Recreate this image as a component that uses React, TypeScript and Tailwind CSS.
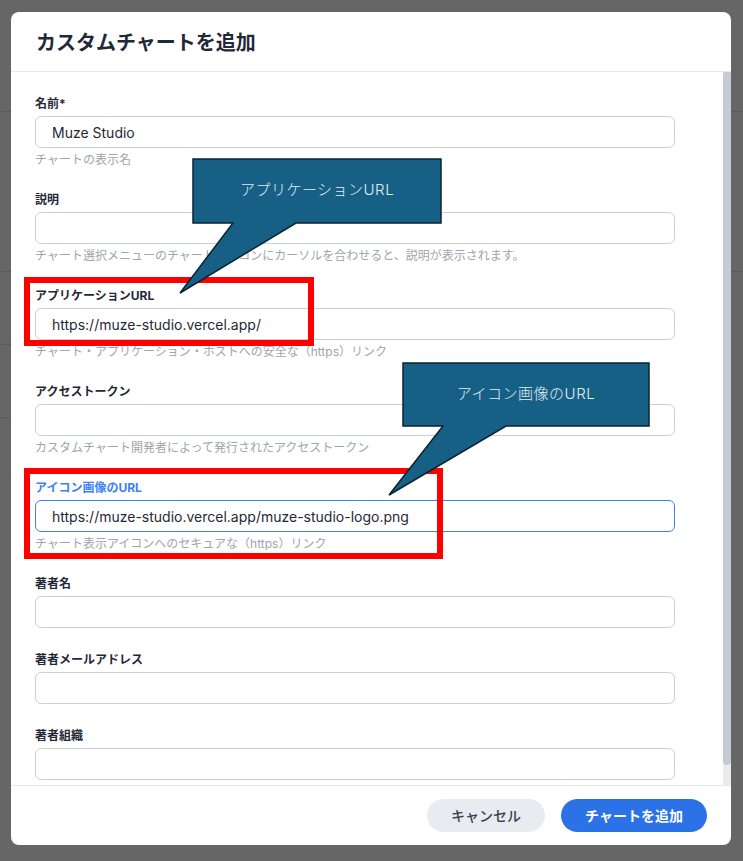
import React from "react";

interface Field {
  label: string;
  value?: string;
  help?: string;
  active?: boolean;
}

const fields: Field[] = [
  { label: "名前*", value: "Muze Studio", help: "チャートの表示名" },
  {
    label: "説明",
    help: "チャート選択メニューのチャートアイコンにカーソルを合わせると、説明が表示されます。",
  },
  {
    label: "アプリケーションURL",
    value: "https://muze-studio.vercel.app/",
    help: "チャート・アプリケーション・ホストへの安全な（https）リンク",
  },
  { label: "アクセストークン", help: "カスタムチャート開発者によって発行されたアクセストークン" },
  {
    label: "アイコン画像のURL",
    value: "https://muze-studio.vercel.app/muze-studio-logo.png",
    help: "チャート表示アイコンへのセキュアな（https）リンク",
    active: true,
  },
  { label: "著者名" },
  { label: "著者メールアドレス" },
  { label: "著者組織" },
];

function FormField({ field }: { field: Field }) {
  return (
    <div className="flex flex-col">
      <label
        className={
          "mb-1 text-xs leading-4 font-bold " +
          (field.active ? "text-[#3b82f6]" : "text-[#1f2937]")
        }
      >
        {field.label}
      </label>
      <input
        readOnly
        defaultValue={field.value ?? ""}
        className={
          "h-8 w-full rounded-md border bg-white px-4 text-sm text-[#1f2937] outline-none " +
          (field.active ? "border-[#3b82f6]" : "border-[#cbd0d8]")
        }
      />
      {field.help && (
        <p className="mt-1 text-xs leading-4 whitespace-nowrap text-[#a0a5ad]">{field.help}</p>
      )}
    </div>
  );
}

export default function App() {
  return (
    <div className="relative h-[861px] w-[743px] overflow-hidden bg-[#666666] font-['Inter','Noto_Sans_CJK_JP',sans-serif]">
      {/* page behind the dialog */}
      <div className="absolute top-[111px] left-0 h-px w-full bg-[#5b5b5b]" />
      <div className="absolute top-[271px] left-0 h-px w-full bg-[#5b5b5b]" />
      <div className="absolute top-[344px] left-0 h-px w-[12px] bg-[#5b5b5b]" />
      <div className="absolute top-[417px] left-0 h-px w-[12px] bg-[#5b5b5b]" />

      <div className="relative px-[11px] pt-[12px]">
        <div className="flex h-[833px] w-[720px] flex-col overflow-hidden rounded-lg bg-white">
          {/* Header */}
          <div className="flex h-[60px] shrink-0 items-center border-b border-[#e6e8eb] px-[25px] pt-[2px]">
            <h2 className="text-xl font-bold text-[#1f2937]">カスタムチャートを追加</h2>
          </div>

          {/* Body with its scrollbar */}
          <div className="flex min-h-0 flex-1">
            <div className="min-w-0 flex-1 overflow-hidden">
              <div className="flex w-[688px] flex-col gap-6 px-6 pt-6 pb-6">
                {fields.map((f) => (
                  <FormField key={f.label} field={f} />
                ))}
              </div>
            </div>
            <div className="flex w-2 shrink-0 flex-col bg-[#e9ebef]">
              <div className="h-[693px] rounded-b-[4px] rounded-t-[2px] bg-[#c5cbd4]" />
            </div>
          </div>

          {/* Footer */}
          <div className="flex h-[60px] shrink-0 items-center justify-end gap-4 border-t border-[#e6e8eb] px-6">
            <button className="h-[33px] w-[118px] rounded-full bg-[#e8ebf0] text-sm font-medium text-[#374151]">
              キャンセル
            </button>
            <button className="h-[33px] w-[146px] rounded-full bg-[#2b72e6] text-sm font-bold text-white">
              チャートを追加
            </button>
          </div>
        </div>
      </div>

      {/* Annotations */}
      <div className="absolute top-[277px] left-[24px] h-[69px] w-[290px] border-[6px] border-[#ff0000]" />
      <div className="absolute top-[468px] left-[24px] h-[91px] w-[419px] border-[6px] border-[#ff0000]" />

      <svg className="pointer-events-none absolute top-0 left-0" width="743" height="861" viewBox="0 0 743 861">
        <path
          d="M193 159 H441 V223 H296 L180 293 L233 223 H193 Z"
          fill="#176085"
          stroke="#0a2331"
          strokeWidth="1.5"
        />
        <path
          d="M403 363 H649 V426 H506 L389 495 L443 426 H403 Z"
          fill="#176085"
          stroke="#0a2331"
          strokeWidth="1.5"
        />
      </svg>
      <div className="absolute top-[159px] left-[193px] flex h-[62px] w-[248px] items-center justify-center text-[15px] font-light tracking-[0.5px] text-[#e2edf3]">
        アプリケーションURL
      </div>
      <div className="absolute top-[363px] left-[403px] flex h-[62px] w-[246px] items-center justify-center text-[15px] font-light tracking-[0.5px] text-[#e2edf3]">
        アイコン画像のURL
      </div>
    </div>
  );
}
